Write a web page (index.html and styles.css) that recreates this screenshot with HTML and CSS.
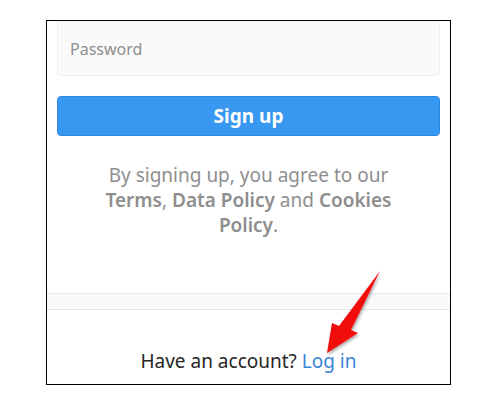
FILE: index.html
```html
<!DOCTYPE html>
<html lang="en">
<head>
    <meta charset="UTF-8">
    <meta name="viewport" content="width=device-width, initial-scale=1.0">
    <title>Sign up</title>
    <link rel="stylesheet" href="styles.css">
</head>
<body>
    <div class="frame">
        <form class="signup-form">
            <input type="password" class="field" placeholder="Password">
            <button type="submit" class="signup-button">Sign up</button>
            <p class="terms">By signing up, you agree to our <b>Terms</b>, <b>Data Policy</b> and <b>Cookies Policy</b>.</p>
        </form>
        <div class="divider"></div>
        <p class="login-line">Have an account? <a href="#" class="login-link">Log in</a></p>

        <svg class="arrow" width="70" height="100" viewBox="0 0 70 100">
            <defs>
                <filter id="shadow" x="-30%" y="-30%" width="160%" height="160%">
                    <feDropShadow dx="1" dy="2" stdDeviation="1.5" flood-color="#000" flood-opacity="0.35"/>
                </filter>
            </defs>
            <polygon points="63,4 34,63 41,66 10,86 15,56 22,59" fill="#f20a0a" filter="url(#shadow)"/>
        </svg>
    </div>
</body>
</html>
```

FILE: styles.css
```css
body {
    margin: 0;
    background: #fff;
    font-family: "Noto Sans", "Open Sans", sans-serif;
}
.frame {
    position: relative;
    box-sizing: border-box;
    width: 405px;
    height: 365px;
    margin: 20px 0 0 46px;
    border: 1px solid #000;
    overflow: hidden;
    display: flex;
    flex-direction: column;
}
.signup-form {
    display: flex;
    flex-direction: column;
    padding: 0 10px;
    margin-top: -10px;
}
.field {
    box-sizing: border-box;
    height: 65px;
    padding: 10px 12px 0;
    border: 1px solid #efefef;
    border-radius: 4px;
    background: #fafafa;
    font-family: inherit;
    font-size: 16px;
    color: #262626;
}
.field::placeholder {
    color: #8e8e8e;
}
.signup-button {
    height: 40px;
    margin-top: 20px;
    border: 1px solid #2d88e0;
    border-radius: 4px;
    background: #3897f0;
    color: #fff;
    font-family: inherit;
    font-size: 19px;
    font-weight: bold;
    cursor: pointer;
}
.terms {
    margin: 27px 40px 0;
    text-align: center;
    color: #8e8e8e;
    font-size: 19px;
    line-height: 25px;
}
.terms b {
    font-weight: 600;
}
.divider {
    height: 15px;
    margin-top: 55px;
    border-top: 1px solid #e6e6e6;
    border-bottom: 1px solid #e6e6e6;
    background: #fafafa;
}
.login-line {
    margin: 38px 0 0;
    text-align: center;
    color: #262626;
    font-size: 19px;
}
.login-link {
    color: #3a84d8;
    text-decoration: none;
}
.arrow {
    position: absolute;
    left: 270px;
    top: 246px;
}
```
